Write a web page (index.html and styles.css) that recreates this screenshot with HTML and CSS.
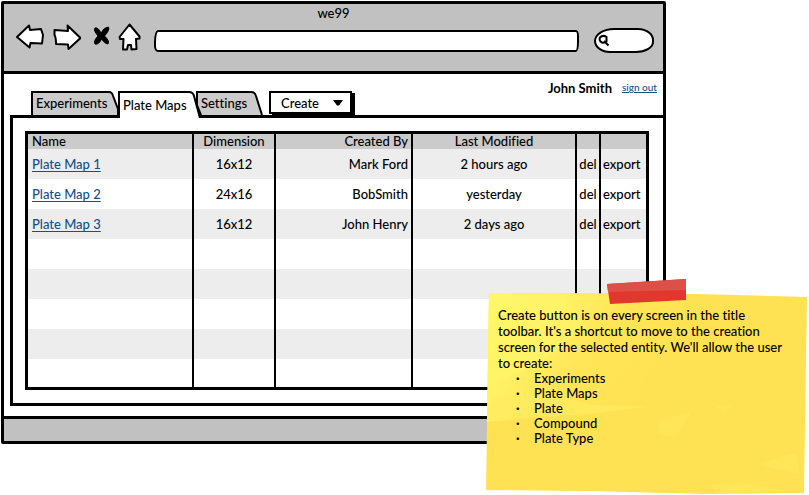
FILE: index.html
```html
<!DOCTYPE html>
<html lang="en">
<head>
<meta charset="utf-8">
<title>we99</title>
<link rel="stylesheet" href="styles.css">
</head>
<body>
<div class="stage">
<main class="window">
  <header class="chrome">
    <h1 class="title">we99</h1>
    <div class="toolbar">
      <div class="nav">
        <button class="icon" type="button" aria-label="Back">
          <svg width="28" height="26" viewBox="0 0 28 26"><path d="M1 13 13 1.500 14 6 25 5 27 11 26 19.500 14.500 19 13.500 23.500Z"/></svg>
        </button>
        <button class="icon icon-forward" type="button" aria-label="Forward">
          <svg width="28" height="26" viewBox="0 0 28 26"><path d="M1.500 6 15 7 14.500 1.500 27.500 14 15.500 25 15 20.500 3 20Q3 13 1.500 11Z"/></svg>
        </button>
        <button class="icon icon-stop" type="button" aria-label="Stop">
          <svg width="18" height="20" viewBox="0 0 18 20"><path class="solid" d="M2 2Q5 1 8 7 11 1 15.500 1 17 4 11.500 10 17 15 15 18 12 18 8.500 13 6 19 2 18 0 15 5 10 0 4 2 2Z"/></svg>
        </button>
        <button class="icon icon-home" type="button" aria-label="Home">
          <svg width="23" height="28" viewBox="0 0 23 28"><path d="M11.500 1.500 1.500 14 2 16 5.500 16 5 26.500 9 26.500 10 22 13 22 13.500 26.500 18.500 26 18 16 21.500 15.500 21.500 13.500Z"/></svg>
        </button>
      </div>
      <input class="address" type="text" aria-label="Address">
      <div class="search">
        <svg width="13" height="13" viewBox="0 0 13 13" aria-hidden="true"><path d="M2 3.500Q5 .5 8.500 3L8.500 7.500Q5 10 2.500 7.500Q1 5.500 2 3.500ZM6 7 10.500 11.500"/></svg>
        <input class="search-field" type="text" aria-label="Search">
      </div>
    </div>
  </header>

  <div class="page">
    <div class="topline">
      <nav class="tabs">
        <button class="tab" type="button">
          <svg viewBox="0 0 88 24" preserveAspectRatio="none" aria-hidden="true"><path d="M1 24V1H79Q82 1 83 5L88 18V24"/></svg>
          <span>Experiments</span>
        </button>
        <button class="tab tab-active" type="button">
          <svg viewBox="0 0 82 27" preserveAspectRatio="none" aria-hidden="true"><path class="fill" d="M1 27V1H71Q75 1 76 5L82 27Z"/><path class="line" d="M1 27V1H71Q75 1 76 5L82 27"/></svg>
          <span>Plate Maps</span>
        </button>
        <button class="tab tab-last" type="button">
          <svg viewBox="0 0 67 24" preserveAspectRatio="none" aria-hidden="true"><path d="M5 24 1 14V1H55Q59 1 60 5L66 24"/></svg>
          <span>Settings</span>
        </button>
      </nav>
      <div class="create">
        <select aria-label="Create"><option>Create</option></select>
        <svg width="10" height="6" viewBox="0 0 10 6" aria-hidden="true"><path d="M0 0H10L6 5.500H4Z"/></svg>
      </div>
      <div class="account">
        <strong>John Smith</strong>
        <a href="#">sign out</a>
      </div>
    </div>

    <section class="panel">
      <table>
        <colgroup><col><col class="c-dim"><col class="c-by"><col class="c-mod"><col class="c-del"><col class="c-exp"></colgroup>
        <thead>
          <tr><th class="left">Name</th><th>Dimension</th><th class="right">Created By</th><th>Last Modified</th><th></th><th></th></tr>
        </thead>
        <tbody>
          <tr><td class="left"><a href="#">Plate Map 1</a></td><td>16x12</td><td class="right">Mark Ford</td><td>2 hours ago</td><td>del</td><td class="export">export</td></tr>
          <tr><td class="left"><a href="#">Plate Map 2</a></td><td>24x16</td><td class="right">BobSmith</td><td>yesterday</td><td>del</td><td class="export">export</td></tr>
          <tr><td class="left"><a href="#">Plate Map 3</a></td><td>16x12</td><td class="right">John Henry</td><td>2 days ago</td><td>del</td><td class="export">export</td></tr>
          <tr><td></td><td></td><td></td><td></td><td></td><td></td></tr>
          <tr><td></td><td></td><td></td><td></td><td></td><td></td></tr>
          <tr><td></td><td></td><td></td><td></td><td></td><td></td></tr>
          <tr><td></td><td></td><td></td><td></td><td></td><td></td></tr>
          <tr><td></td><td></td><td></td><td></td><td></td><td></td></tr>
        </tbody>
      </table>
    </section>
  </div>
  <footer class="status"></footer>
</main>

<aside class="note">
  <svg class="paper" viewBox="0 0 322 216" preserveAspectRatio="none" aria-hidden="true">
    <defs>
      <linearGradient id="sheen" x1="0" y1="0" x2="1" y2="0.500">
        <stop offset="0" stop-color="#ffff6c"/><stop offset=".3" stop-color="#fff266"/><stop offset=".6" stop-color="#ffe557"/><stop offset="1" stop-color="#ffe253"/>
      </linearGradient>
    </defs>
    <path fill="#ffe253" d="M3 14 210 15 321 18 318 214 220 215 100 212 0 211Z"/>
    <path fill="url(#sheen)" d="M3 14 200 15 190 60 160 95 150 130 60 138 1 143Z"/>
    <path fill="#fff368" opacity=".7" d="M3 14 75 15 100 48 65 75 30 95 2 105Z"/>
    <path fill="#ffec60" opacity=".7" d="M5 119 60 113 105 126 160 128 100 135 2 141Z"/>
    <path fill="#ffea5e" opacity=".5" d="M175 140 205 133 190 158 172 155ZM225 126 245 127 240 133ZM270 185 310 174 314 195 290 190ZM225 206 250 202 300 212 230 214Z"/>
    <path fill="#e1372c" d="M121 5 200 0 200 21 124 25Z"/>
    <path fill="#dc5048" d="M121 5 200 0 200 11 122 13Z"/>
  </svg>
  <p>Create button is on every screen in the title<br>toolbar. It's a shortcut to move to the creation<br>screen for the selected entity. We'll allow the user<br>to create:</p>
  <ul><li>Experiments</li><li>Plate Maps</li><li>Plate</li><li>Compound</li><li>Plate Type</li></ul>
</aside>
</div>
</body>
</html>
```

FILE: styles.css
```css
* { box-sizing: border-box; }
body {
  margin: 0;
  background: #fff;
  color: #000;
  font: 500 13px/16px Lato, "Open Sans", sans-serif;
  font-variant-ligatures: none;
}
button, input, select { font: inherit; color: inherit; }
a { color: #13508f; }
.stage { position: relative; min-height: 100vh; padding: 1px 1px 50px; }
.window {
  margin-right: 142px;
  border: 3px solid #000;
  border-radius: 2px;
}

/* Browser bar */
.chrome {
  height: 70px;
  background: #c1c1c1;
  border-bottom: 3px solid #000;
}
.title { margin: 0; padding-top: 1px; font: inherit; text-align: center; }
.toolbar {
  display: flex;
  align-items: flex-start;
  gap: 15px;
  padding: 2px 9px 0 12px;
}
.nav { display: flex; align-items: center; gap: 9px; width: 123px; }
.icon { display: flex; padding: 0; border: 0; background: none; }
.icon path { fill: #fff; stroke: #000; stroke-width: 2; stroke-linejoin: round; }
.icon .solid { fill: #000; stroke-width: 1; }
.icon-stop { margin: 0 -2px 2px 3px; }
.address {
  flex: 1;
  min-width: 0;
  height: 22px;
  margin-top: 7px;
  padding: 0 6px;
  border: 2px solid #000;
  border-radius: 4px 3px 3px 4px / 12px 6px 10px 6px;
  background: #fff;
}
.search {
  display: flex;
  align-items: center;
  width: 60px;
  height: 25px;
  margin-top: 5px;
  padding-left: 2px;
  border: 2px solid #000;
  border-radius: 20px 16px 18px 16px / 13px 12px 11px 12px;
  background: #fff;
}
.search svg { flex: none; fill: none; stroke: #000; stroke-width: 2; }
.search-field { flex: 1; min-width: 0; padding: 0; border: 0; background: none; }

/* Tabs and account */
.page { padding: 0 0 10px 6px; }
.topline { display: flex; align-items: flex-end; height: 41px; padding-left: 21px; }
.tabs { display: flex; }
.tab {
  position: relative;
  width: 87px;
  height: 24px;
  padding: 0 0 0 5px;
  border: 0;
  background: none;
  text-align: left;
  white-space: nowrap;
}
.tab svg {
  position: absolute;
  inset: 0;
  width: 100%;
  height: 100%;
  fill: #cbcbcb;
  stroke: #000;
  stroke-width: 2;
}
.tab span { position: relative; }
.tab-active { z-index: 2; width: 82px; height: 27px; margin-bottom: -3px; }
.tab-active .fill { fill: #fff; stroke: none; }
.tab-active .line { fill: none; }
.tab-last { width: 67px; margin-left: -4px; }
.create {
  position: relative;
  display: flex;
  align-items: center;
  width: 83px;
  height: 23px;
  margin: 0 0 1px 6px;
  border: 2px solid #000;
  background: #fff;
  box-shadow: 3px 2px 0 #000;
}
.create select {
  width: 100%;
  padding: 0 0 0 10px;
  border: 0;
  background: none;
  appearance: none;
}
.create svg { position: absolute; right: 7px; pointer-events: none; }
.account {
  display: flex;
  gap: 10px;
  align-self: flex-start;
  margin: 6px 6px 0 auto;
}
.account a { font-size: 10px; line-height: 14px; }

/* Panel and table */
.panel {
  margin-right: -3px;
  padding: 13px 14px 13px 12px;
  border: 3px solid #000;
  border-radius: 0 2px 0 0;
}
table {
  width: 100%;
  border: 3px solid #000;
  border-spacing: 0;
  table-layout: fixed;
}
.c-dim { width: 82px; }
.c-by { width: 137px; }
.c-mod { width: 164px; }
.c-del { width: 24px; }
.c-exp { width: 47px; }
th, td { padding: 0; font-weight: inherit; text-align: center; white-space: nowrap; }
th + th, td + td { border-left: 2px solid #000; }
th { height: 15px; line-height: 15px; background: #cbcbcb; }
td { height: 30px; }
tbody tr:nth-child(odd) { background: #ededed; }
tbody tr:last-child td { height: 28px; }
.left { padding-left: 4px; text-align: left; }
.right { padding-right: 3px; text-align: right; }
td.export { padding-left: 2px; text-align: left; }
td a { text-underline-offset: 2px; }
.status { height: 25px; border-top: 3px solid #000; background: #c1c1c1; }

/* Sticky note */
.note {
  position: absolute;
  top: 279px;
  right: 1px;
  width: 322px;
  height: 216px;
  padding: 28px 12px 0;
}
.paper { position: absolute; inset: 0; width: 100%; height: 100%; }
.note p, .note ul { position: relative; margin: 0; white-space: nowrap; }
.note ul { padding-left: 36px; line-height: 15px; list-style: none; }
.note li { position: relative; }
.note li::before { content: "·"; position: absolute; left: -18px; font-weight: 700; }
```
